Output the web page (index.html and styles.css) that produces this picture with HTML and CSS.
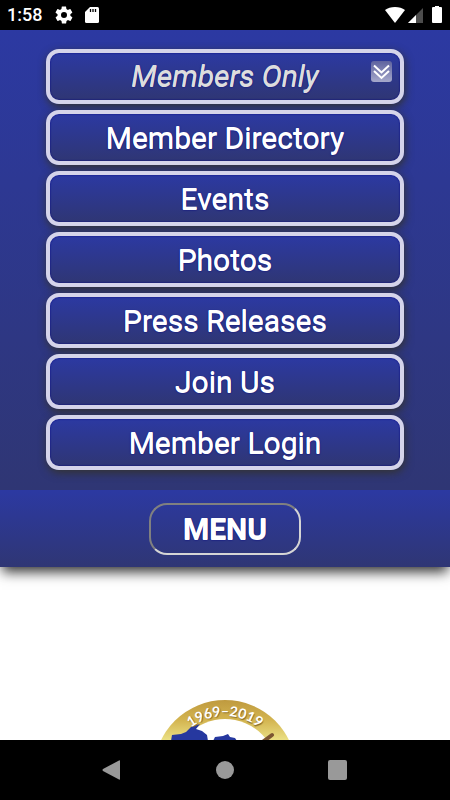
FILE: index.html
```html
<!DOCTYPE html>
<html lang="en">
<head>
    <meta charset="UTF-8">
    <meta name="viewport" content="width=device-width, initial-scale=1.0">
    <title>Members</title>
    <link rel="stylesheet" href="styles.css">
</head>
<body>
    <div class="status-bar">
        <span class="clock">1:58</span>
        <svg class="gear" width="18" height="18" viewBox="1.500 1.500 21 21" fill="#fff"><path d="M19.4 13c0-.3.1-.6.1-1s0-.7-.1-1l2.100-1.600c.2-.2.300-.400.1-.7l-2-3.400c-.1-.2-.4-.3-.6-.2l-2.500 1c-.5-.4-1.100-.7-1.700-1l-.4-2.600c0-.3-.2-.5-.5-.5h-4c-.3 0-.5.2-.5.5l-.4 2.600c-.6.300-1.200.6-1.700 1l-2.500-1c-.2-.1-.5 0-.6.2l-2 3.400c-.1.2-.1.5.1.7L4.500 11c0 .3-.1.6-.1 1s0 .7.1 1l-2.100 1.600c-.2.200-.3.500-.1.700l2 3.400c.1.200.4.300.6.200l2.500-1c.5.400 1.100.7 1.700 1l.4 2.600c0 .3.200.5.5.5h4c.3 0 .5-.2.5-.5l.4-2.600c.6-.3 1.200-.6 1.700-1l2.500 1c.2.100.5 0 .6-.2l2-3.400c.1-.2.100-.5-.1-.7zM12 15.500a3.500 3.500 0 1 1 0-7 3.500 3.500 0 0 1 0 7z"/></svg>
        <svg class="sd-card" width="14" height="16" viewBox="0 0 14 16"><path fill="#fff" d="M5 0h7.500Q14 0 14 1.500v13q0 1.500-1.500 1.500h-11Q0 16 0 14.500V5z"/><path stroke="#000" stroke-width="1.300" d="M5.500 2v3M8 2v3M10.500 2v3"/></svg>
        <svg class="wifi" width="20" height="16" viewBox="0 0 20 16"><path fill="#fff" d="M0 3Q4 0 10 0t10 3L10 16z"/></svg>
        <svg class="signal" width="15" height="15" viewBox="0 0 15 15"><path fill="#4d4d4d" d="M15 0v15H0z"/><path fill="#fff" d="M8 7v8H0z"/></svg>
        <svg class="battery" width="10" height="18" viewBox="0 0 10 18"><path fill="#fff" d="M3 0h4v1h2q1 0 1 1v14q0 1-1 1H1q-1 0-1-1V2q0-1 1-1h2z"/></svg>
    </div>

    <header class="site-header">
        <nav class="menu-panel">
            <a class="menu-item members-only" href="#">Members Only
                <svg class="expand" width="21" height="21" viewBox="0 0 21 21">
                    <defs>
                        <linearGradient id="expand-fill" x2="0" y2="1">
                            <stop offset="0" stop-color="#5f639f"/>
                            <stop offset="1" stop-color="#a5a8cb"/>
                        </linearGradient>
                    </defs>
                    <rect width="21" height="21" rx="3" fill="url(#expand-fill)"/>
                    <path d="M3 4.500l7.500 7 7.500-7M3 10l7.500 7 7.500-7" fill="none" stroke="#fff" stroke-width="2"/>
                </svg>
            </a>
            <a class="menu-item" href="#">Member Directory</a>
            <a class="menu-item" href="#">Events</a>
            <a class="menu-item" href="#">Photos</a>
            <a class="menu-item" href="#">Press Releases</a>
            <a class="menu-item" href="#">Join Us</a>
            <a class="menu-item" href="#">Member Login</a>
        </nav>
        <div class="menu-bar">
            <button class="menu-button" type="button">MENU</button>
        </div>
    </header>

    <main class="content">
        <svg class="seal" width="144" height="144" viewBox="0 0 144 144">
            <defs>
                <linearGradient id="gold" x2="0" y2="1">
                    <stop offset="0" stop-color="#bf9a3f"/>
                    <stop offset=".14" stop-color="#d3b450"/>
                    <stop offset=".28" stop-color="#eadf83"/>
                    <stop offset="1" stop-color="#bf9a3f"/>
                </linearGradient>
                <path id="seal-arc" d="M17 72a55 55 0 0 1 110 0"/>
            </defs>
            <circle cx="72" cy="72" r="71" fill="url(#gold)"/>
            <circle cx="72" cy="72" r="52" fill="#fff"/>
            <path fill="#26389f" d="M18 42l1-6 9-1 5-2 5-5 9-3-4 5 6 2 5 4 1 6zM60 42l2-4 8-1 5-2 2 3 5 1 2 3z"/>
            <path d="M119 36l-12 9" stroke="#7c5632" stroke-width="4" stroke-linecap="round"/>
            <text class="seal-text"><textPath href="#seal-arc" startOffset="50%">1969–2019</textPath></text>
        </svg>
    </main>

    <footer class="nav-bar">
        <button type="button" aria-label="Back"><svg width="20" height="20" viewBox="0 0 20 20"><path fill="#999" d="M18 1v18q0 1-1 .5L1 11q-1-1 0-2L17 .5q1-.5 1 .5z"/></svg></button>
        <button type="button" aria-label="Home"><svg width="20" height="20" viewBox="0 0 20 20"><circle cx="10" cy="10" r="9" fill="#999"/></svg></button>
        <button type="button" aria-label="Recent apps"><svg width="20" height="20" viewBox="0 0 20 20"><rect width="19" height="20" rx="2" fill="#999"/></svg></button>
    </footer>
</body>
</html>
```
FILE: styles.css
```css
* {
    box-sizing: border-box;
}
body {
    margin: 0;
    height: 100vh;
    display: flex;
    flex-direction: column;
    overflow: hidden;
    font-family: Roboto, sans-serif;
    background: #fff;
}
.status-bar {
    display: flex;
    align-items: center;
    height: 30px;
    padding: 0 8px 0 7px;
    background: #000;
    color: #fff;
    flex-shrink: 0;
}
.clock {
    font-size: 18px;
    font-weight: 500;
    line-height: 30px;
    margin-right: 13px;
}
.gear {
    margin-right: 12px;
}
.wifi {
    margin-left: auto;
    margin-right: 3px;
}
.signal {
    margin-right: 9px;
}
.site-header {
    position: relative;
    flex-shrink: 0;
    box-shadow: 0 7px 12px -2px rgba(0, 0, 0, 0.8);
}
.menu-panel,
.menu-bar,
.menu-item {
    background: linear-gradient(#2c39a2, #2f3674);
}
.menu-panel {
    display: flex;
    flex-direction: column;
    gap: 6px;
    padding: 19px 46px 20px;
}
.menu-item {
    position: relative;
    height: 55px;
    border: 4px solid #d5d4ea;
    border-radius: 13px;
    box-shadow: 1px 3px 8px #333, inset 0 0 2px #000080;
    color: #fff;
    font-size: 30px;
    line-height: 47px;
    text-align: center;
    text-decoration: none;
    text-shadow: 0 1px currentColor, 0 1px 2px #000080;
}
.members-only {
    color: #ddd;
    font-style: italic;
    line-height: 45px;
}
.expand {
    position: absolute;
    top: 8px;
    right: 8px;
}
.menu-bar {
    display: flex;
    justify-content: center;
    padding: 13px 0 12px;
}
.menu-button {
    width: 152px;
    height: 52px;
    padding: 0 0 2px;
    border: 2px solid;
    border-color: #808080 #d5d5d5 #d5d5d5 #808080;
    border-radius: 18px;
    background: none;
    color: #fff;
    font: bold 30px Roboto, sans-serif;
    text-shadow: 0 1px currentColor, 0 1px 2px #000080;
}
.content {
    flex: 1;
    min-height: 0;
    padding-top: 132px;
    overflow: hidden;
    text-align: center;
}
.seal-text {
    fill: #fff;
    font: bold 14px Lato, sans-serif;
    text-anchor: middle;
    text-shadow: 1px 1px 1px #8a6d2a;
}
.nav-bar {
    display: flex;
    justify-content: center;
    gap: 93px;
    height: 60px;
    background: #000;
    flex-shrink: 0;
}
.nav-bar button {
    display: flex;
    align-items: center;
    padding: 0;
    border: 0;
    background: none;
}
```
